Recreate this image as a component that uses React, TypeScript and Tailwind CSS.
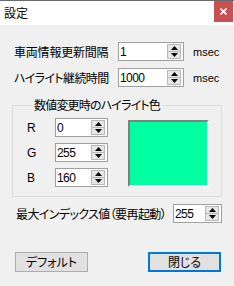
import { ReactNode } from "react";

const jp = "font-['Noto_Sans_CJK_JP','Noto_Sans',sans-serif] [font-feature-settings:'palt']";
const latin = "font-['Liberation_Sans',Arial,sans-serif]";

function Spinner() {
    return (
        <div className="flex flex-col w-[14px] h-[15px] border border-[#b9b9b9] bg-[#e6e6e6]">
            <div className="flex-1 flex items-center justify-center border-b border-[#b9b9b9]">
                <svg width="7" height="4" viewBox="0 0 7 4">
                    <path d="M3.5 0 L7 4 L0 4 Z" fill="#000" />
                </svg>
            </div>
            <div className="flex-1 flex items-center justify-center">
                <svg width="7" height="4" viewBox="0 0 7 4">
                    <path d="M0 0 L7 0 L3.5 4 Z" fill="#000" />
                </svg>
            </div>
        </div>
    )
}

function NumberBox({ value, width }: { value: string; width: string }) {
    return (
        <div className={`flex items-center h-[19px] border border-[#a0a0a0] bg-white pl-[1px] pr-[2px] ${width}`}>
            <span className={`flex-1 text-[12px] leading-[14px] tracking-[-0.6px] text-black ${latin}`}>{value}</span>
            <Spinner />
        </div>
    )
}

function Button({ children, primary }: { children: ReactNode; primary?: boolean }) {
    return (
        <button
            className={`w-[73px] h-[20px] flex items-center justify-center bg-[#e1e1e1] text-[12px] leading-[14px] text-black ${jp} ${primary ? "border-2 border-[#0078d7]" : "border border-[#adadad]"}`}
        >
            {children}
        </button>
    )
}

export default function App() {
    return (
        <div className={`w-[234px] h-[286px] bg-[#f0f0f0] border-t border-[#6b6b6b] flex flex-col text-black ${jp}`}>
            <div className="h-[24px] bg-white flex items-start justify-between">
                <span className="pl-[4px] pt-[5px] text-[12px] leading-[14px]">設定</span>
                <div className="w-[19px] h-[21px] mr-[1px] bg-[#c75050] flex items-center justify-center">
                    <svg width="7" height="7" viewBox="0 0 7 7">
                        <path d="M0.5 0.5 L6.5 6.5 M6.5 0.5 L0.5 6.5" stroke="#fff" strokeWidth="1.6" />
                    </svg>
                </div>
            </div>

            <div className="flex flex-col pt-[17px]">
                <div className="flex items-center h-[19px] pl-[14px]">
                    <span className="w-[104px] text-[12px] leading-[14px] whitespace-nowrap tracking-[-0.2px]">車両情報更新間隔</span>
                    <NumberBox value="1" width="w-[66px]" />
                    <span className={`ml-[9px] text-[11px] leading-[14px] ${latin}`}>msec</span>
                </div>
                <div className="flex items-center h-[19px] pl-[14px] mt-[7px]">
                    <span className="w-[104px] text-[12px] leading-[14px] whitespace-nowrap tracking-[-0.6px]">ハイライト継続時間</span>
                    <NumberBox value="1000" width="w-[66px]" />
                    <span className={`ml-[9px] text-[11px] leading-[14px] ${latin}`}>msec</span>
                </div>

                <fieldset className="mt-[11px] ml-[12px] w-[210px] border border-[#dcdcdc] pt-[6px] pb-[9px] pl-[14px]">
                    <legend className="ml-[5px] px-[2px] text-[12px] leading-[14px] tracking-[-0.8px]">数値変更時のハイライト色</legend>
                    <div className="flex">
                        <div className="flex flex-col gap-[6px]">
                            {[["R", "0"], ["G", "255"], ["B", "160"]].map(([label, value]) => (
                                <div key={label} className="flex items-center h-[19px]">
                                    <span className={`w-[28px] text-[12px] leading-[14px] ${latin}`}>{label}</span>
                                    <NumberBox value={value} width="w-[53px]" />
                                </div>
                            ))}
                        </div>
                        <div className="ml-[20px] mt-[2px] w-[81px] h-[67px] bg-[#00ffa0] border-2 border-t-[#808080] border-l-[#808080] border-b-white border-r-white" />
                    </div>
                </fieldset>

                <div className="flex items-center h-[19px] pl-[16px] mt-[7px]">
                    <span className="w-[157px] text-[12px] leading-[14px] whitespace-nowrap tracking-[-0.6px]">最大インデックス値（要再起動）</span>
                    <NumberBox value="255" width="w-[49px]" />
                </div>

                <div className="flex mt-[29px] ml-[15px] gap-[60px]">
                    <Button>デフォルト</Button>
                    <Button primary>閉じる</Button>
                </div>
            </div>
        </div>
    )
}
